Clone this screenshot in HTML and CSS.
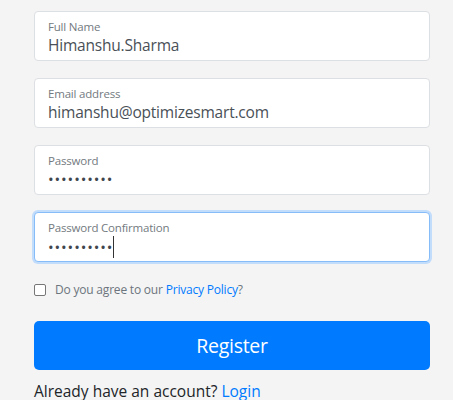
FILE: index.html
```html
<!DOCTYPE html>
<html lang="en">
<head>
<meta charset="utf-8">
<title>Register</title>
<link rel="stylesheet" href="styles.css">
</head>
<body>
<form class="form">
  <div class="field">
    <span class="label">Full Name</span>
    <span class="value">Himanshu.Sharma</span>
  </div>
  <div class="field">
    <span class="label">Email address</span>
    <span class="value">himanshu@optimizesmart.com</span>
  </div>
  <div class="field">
    <span class="label">Password</span>
    <span class="value dots">••••••••••</span>
  </div>
  <div class="field focused">
    <span class="label">Password Confirmation</span>
    <span class="value dots">••••••••••<span class="caret"></span></span>
  </div>
  <label class="agree">
    <span class="checkbox"></span>
    <span>Do you agree to our <a class="link" href="#">Privacy Policy</a>?</span>
  </label>
  <button type="button" class="btn">Register</button>
  <p class="login">Already have an account? <a class="link" href="#">Login</a></p>
</form>
</body>
</html>
```
FILE: styles.css
```css
html, body {
  margin: 0;
  padding: 0;
  background: #f4f4f4;
  font-family: "Open Sans", "Noto Sans", sans-serif;
}
.form {
  width: 396px;
  margin: 11px 0 0 34px;
  display: flex;
  flex-direction: column;
}
.field {
  box-sizing: border-box;
  height: 50px;
  margin-bottom: 17px;
  background: #fff;
  border: 1px solid #dcdfe3;
  border-radius: 4px;
  padding: 7px 0 0 13px;
  display: flex;
  flex-direction: column;
}
.field.focused {
  border-color: #86bdf8;
  box-shadow: 0 0 0 2px #c2dcfb;
}
.label {
  font-size: 11.5px;
  line-height: 16px;
  color: #737a80;
  letter-spacing: -0.2px;
}
.value {
  font-size: 15.5px;
  line-height: 21px;
  color: #495057;
  letter-spacing: -0.2px;
}
.dots {
  font-size: 15px;
  letter-spacing: 0.9px;
  color: #3f464d;
  display: flex;
  align-items: center;
}
.caret {
  display: inline-block;
  width: 1px;
  height: 22px;
  background: #333;
  margin-left: 0;
}
.agree {
  display: flex;
  align-items: center;
  margin-top: 2px;
  font-size: 12px;
  color: #6c757d;
  letter-spacing: -0.2px;
}
.checkbox {
  box-sizing: border-box;
  width: 12px;
  height: 12px;
  border: 1px solid #767676;
  border-radius: 2px;
  background: #fff;
  margin-right: 9px;
}
.link {
  color: #007bff;
  text-decoration: none;
}
.btn {
  margin-top: 23px;
  height: 49px;
  border: none;
  border-radius: 5px;
  background: #007bff;
  color: #fff;
  font-family: inherit;
  font-size: 19.5px;
  letter-spacing: -0.3px;
}
.login {
  margin: 10px 0 0;
  font-size: 15.5px;
  line-height: 22px;
  color: #212529;
  letter-spacing: 0;
}
```
